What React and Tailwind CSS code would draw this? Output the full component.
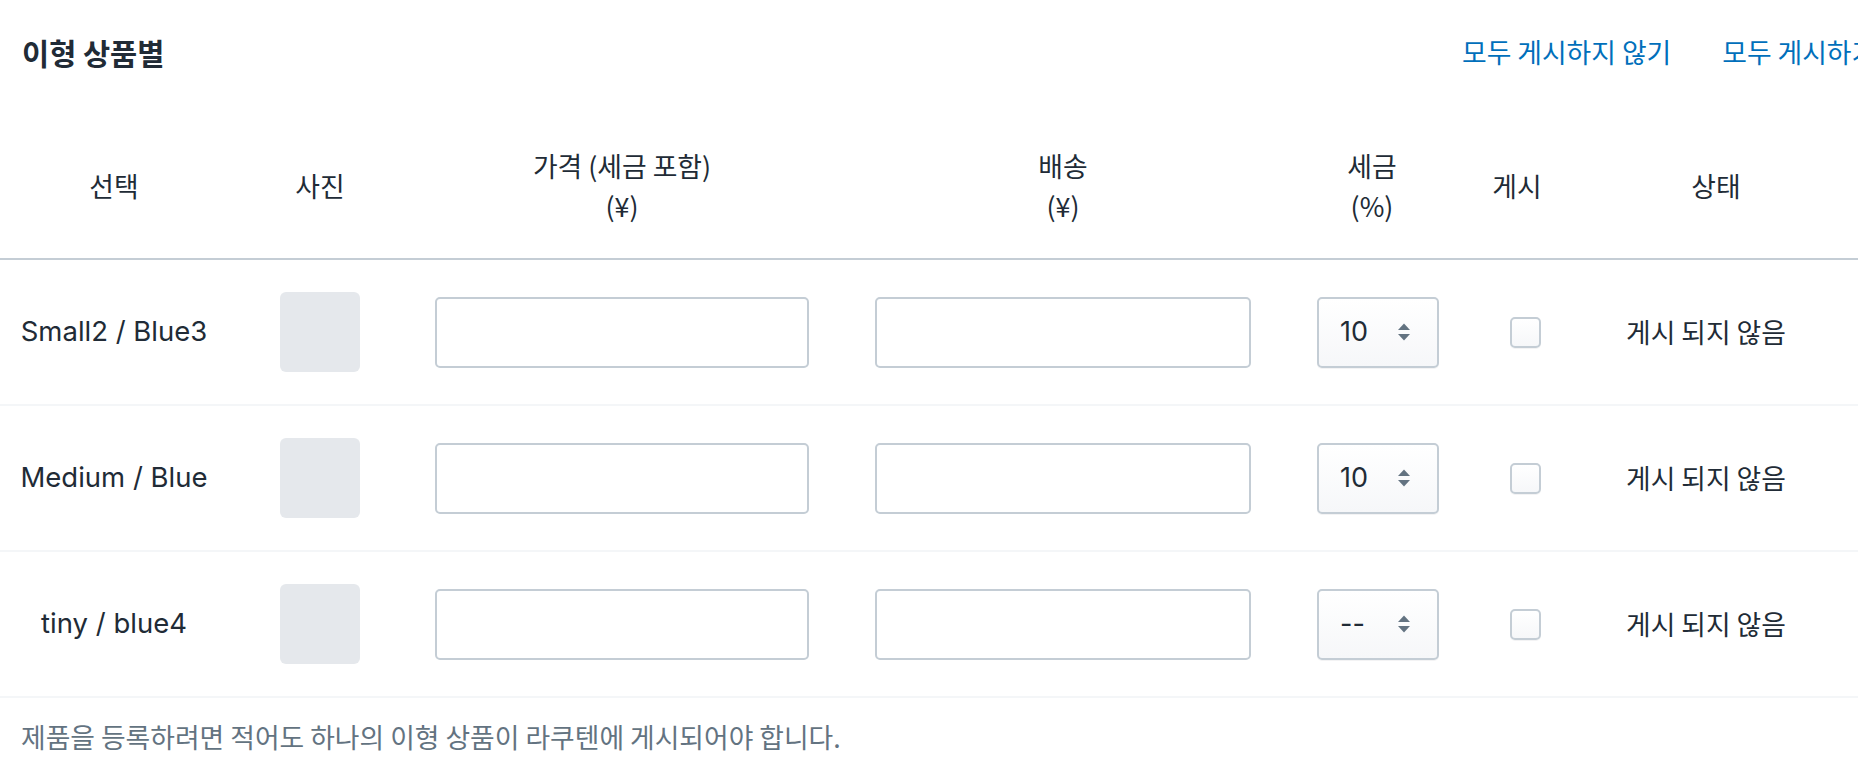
const ROWS = [
  { name: "Small2 / Blue3", tax: "10" },
  { name: "Medium / Blue", tax: "10" },
  { name: "tiny / blue4", tax: "--" },
];

function Stepper() {
  return (
    <svg width="14" height="24" viewBox="0 0 14 24" className="shrink-0">
      <path d="M7 3.5 L13 10 L1 10 Z" fill="#637381" />
      <path d="M7 20.5 L13 14 L1 14 Z" fill="#637381" />
    </svg>
  );
}

export default function App() {
  return (
    <div className="w-[1858px] h-[768px] overflow-hidden bg-white text-[#212b36] font-['Noto_Sans_CJK_KR',sans-serif]">
      {/* Title bar */}
      <div className="flex items-center h-[104px] pl-[22px] whitespace-nowrap">
        <h2 className="w-[1440px] shrink-0 text-[29.5px] font-semibold">이형 상품별</h2>
        <div className="flex gap-[51px] shrink-0 text-[26.8px] text-[#006fbb]">
          <button className="cursor-pointer">모두 게시하지 않기</button>
          <button className="cursor-pointer">모두 게시하기</button>
        </div>
      </div>

      {/* Header */}
      <div className="grid grid-cols-[228px_184px_420px_462px_156px_134px_1fr] h-[156px] pt-[10px] items-center border-b-2 border-[#c4cdd5] text-[26.8px] leading-[40px] text-center">
        <div>선택</div>
        <div>사진</div>
        <div>
          가격 (세금 포함)
          <br />
          (¥)
        </div>
        <div>
          배송
          <br />
          (¥)
        </div>
        <div>
          세금
          <br />
          (%)
        </div>
        <div>게시</div>
        <div className="pr-[10px]">상태</div>
      </div>

      {/* Rows */}
      {ROWS.map((r) => (
        <div
          key={r.name}
          className="grid grid-cols-[228px_184px_420px_462px_156px_134px_1fr] h-[146px] items-center border-b-2 border-[#f4f6f8]"
        >
          <div className="text-center font-['Inter',sans-serif] text-[27.5px]">{r.name}</div>
          <div className="flex justify-center">
            <div className="w-[80px] h-[80px] rounded-[6px] bg-[#e5e8ec]" />
          </div>
          <div className="flex justify-center">
            <input className="w-[374px] h-[71px] rounded-[5px] border-2 border-[#c4cdd5] bg-white outline-none" />
          </div>
          <div className="flex justify-center">
            <input className="w-[376px] h-[71px] rounded-[5px] border-2 border-[#c4cdd5] bg-white outline-none" />
          </div>
          <div>
            <div className="ml-[23px] w-[122px] h-[71px] rounded-[5px] border-2 border-[#c4cdd5] bg-gradient-to-b from-white to-[#f6f7f9] shadow-[0_1px_0_rgba(22,29,37,0.05)] flex items-center pl-[21px] pr-[26px] justify-between font-['Inter',sans-serif] text-[27px]">
              <span>{r.tax}</span>
              <Stepper />
            </div>
          </div>
          <div>
            <div className="ml-[60px] w-[31px] h-[31px] rounded-[5px] border-2 border-[#c4cdd5] bg-gradient-to-b from-white to-[#f6f7f9] shadow-[0_1px_0_rgba(22,29,37,0.05)]" />
          </div>
          <div className="pl-[42px] text-[26.8px] whitespace-nowrap">게시 되지 않음</div>
        </div>
      ))}

      {/* Footer note */}
      <p className="pl-[21px] pt-[21px] text-[26.8px] leading-[36px] text-[#637381] whitespace-nowrap">
        제품을 등록하려면 적어도 하나의 이형 상품이 라쿠텐에 게시되어야 합니다.
      </p>
    </div>
  );
}
